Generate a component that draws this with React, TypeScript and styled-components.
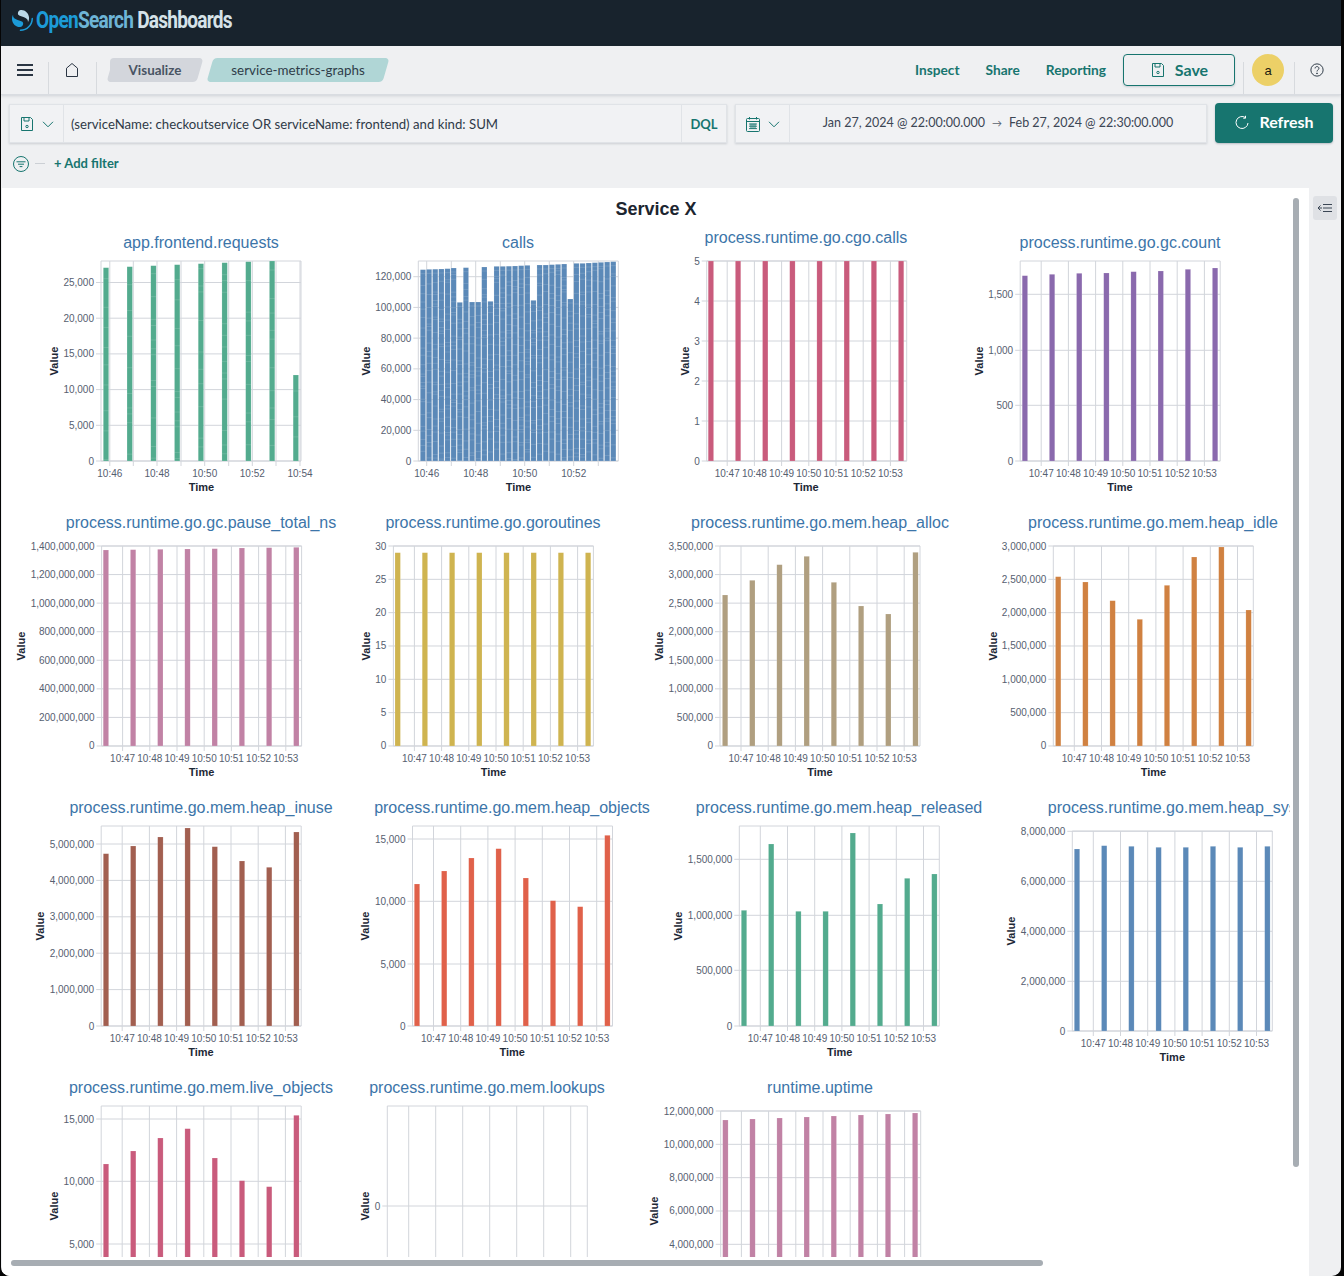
import React from 'react';
import styled, { createGlobalStyle } from 'styled-components';

const GlobalStyle = createGlobalStyle`
  html, body {
    margin: 0;
    padding: 0;
    background: #050505;
  }
  * {
    box-sizing: border-box;
  }
`;

const UI_FONT = `"Lato", "Open Sans", sans-serif`;
const CHART_FONT = `"Liberation Sans", Arial, sans-serif`;
const TEAL = '#17756f';

const Frame = styled.div`
  width: 1340px;
  height: 1276px;
  margin-left: 1px;
  overflow: hidden;
  display: flex;
  flex-direction: column;
  background: #eff0f2;
  border-radius: 0 0 9px 9px;
  font-family: ${UI_FONT};
`;

const TopBar = styled.div`
  height: 46px;
  flex: none;
  display: flex;
  align-items: center;
  gap: 3px;
  padding: 0 0 6px 11px;
  background: #18232d;
`;

const Brand = styled.div`
  font-family: "Roboto", sans-serif;
  font-size: 23px;
  font-weight: 700;
  letter-spacing: -0.9px;
  white-space: nowrap;
  color: #d5e2e8;
  transform: scaleX(0.83);
  transform-origin: left center;
`;

const BrandPart = styled.span<{ $color: string }>`
  color: ${p => p.$color};
`;

const AppBar = styled.div`
  height: 49px;
  flex: none;
  display: flex;
  align-items: stretch;
  padding-left: 0;
  border-bottom: 1px solid #d9dce1;
  box-shadow: 0 1px 3px rgba(60, 70, 90, 0.18);
  background: #eff0f2;
`;

const IconSlot = styled.div<{ $width: number; $shift?: number }>`
  width: ${p => p.$width}px;
  flex: none;
  display: flex;
  align-items: center;
  justify-content: center;
  padding-bottom: 1px;
  padding-right: ${p => p.$shift ?? 0}px;
  color: #2b3644;
`;

const BarDivider = styled.div`
  width: 1px;
  flex: none;
  margin-top: 16px;
  background: #d7dade;
`;

const Crumbs = styled.div`
  display: flex;
  align-items: center;
  gap: 10px;
  margin-left: 13px;
  height: 48px;
`;

const Crumb = styled.div<{ $bg: string; $color: string; $weight: number; $width: number; $first?: boolean }>`
  position: relative;
  width: ${p => p.$width}px;
  height: 24px;
  display: flex;
  align-items: center;
  justify-content: center;
  padding-bottom: 1px;
  font-size: 13.4px;
  font-weight: ${p => p.$weight};
  color: ${p => p.$color};
  z-index: 0;

  &::before {
    content: '';
    position: absolute;
    inset: 0;
    z-index: -1;
    border-radius: 4px;
    background: ${p => p.$bg};
    transform: skewX(-16deg);
  }

  &::after {
    content: '';
    display: ${p => (p.$first ? 'block' : 'none')};
    position: absolute;
    top: 0;
    bottom: 0;
    left: 0;
    width: 16px;
    z-index: -1;
    border-radius: 4px 0 0 4px;
    background: ${p => p.$bg};
  }
`;

const BarSpacer = styled.div`
  flex: 1;
`;

const NavLinks = styled.div`
  display: flex;
  align-items: center;
  gap: 26px;
  margin-right: 17px;
  padding-bottom: 2px;
`;

const NavLink = styled.span`
  font-size: 13.7px;
  font-weight: 700;
  color: ${TEAL};
`;

const SaveButton = styled.div`
  width: 112px;
  height: 32px;
  align-self: center;
  display: flex;
  align-items: center;
  justify-content: center;
  gap: 9px;
  margin-right: 8px;
  border: 1px solid ${TEAL};
  border-radius: 4px;
  font-size: 16px;
  font-weight: 700;
  color: ${TEAL};
  box-shadow: 0 1px 2px rgba(60, 70, 90, 0.2);
`;

const ButtonLabel = styled.span<{ $lift: number }>`
  margin-bottom: ${p => p.$lift}px;
`;

const AvatarSlot = styled.div`
  width: 50px;
  flex: none;
  display: flex;
  align-items: center;
  justify-content: center;
  padding-right: 2px;
`;

const Avatar = styled.div`
  width: 32px;
  height: 32px;
  border-radius: 50%;
  display: flex;
  align-items: center;
  justify-content: center;
  background: #ecd067;
  font-family: ${CHART_FONT};
  font-size: 13px;
  color: #1b1b10;
`;

const QueryRow = styled.div`
  height: 58px;
  flex: none;
  display: flex;
  align-items: flex-start;
  gap: 8px;
  padding: 9px 7px 0 8px;
`;

const FieldGroup = styled.div<{ $width: number }>`
  width: ${p => p.$width}px;
  height: 39px;
  flex: none;
  display: flex;
  align-items: stretch;
  background: #f1f2f4;
  border: 1px solid #e0e3e7;
  box-shadow: 0 1px 2px rgba(60, 70, 90, 0.2);
`;

const FieldPrepend = styled.div<{ $width: number }>`
  width: ${p => p.$width}px;
  flex: none;
  display: flex;
  align-items: center;
  justify-content: center;
  gap: 7px;
  border-right: 1px solid #e0e3e7;
  color: ${TEAL};
`;

const QueryText = styled.div`
  flex: 1;
  display: flex;
  align-items: center;
  padding-left: 7px;
  font-size: 13.2px;
  color: #2f3a48;
  white-space: nowrap;
`;

const LanguageToggle = styled.div`
  width: 45px;
  flex: none;
  display: flex;
  align-items: center;
  justify-content: center;
  border-left: 1px solid #e0e3e7;
  font-size: 13px;
  font-weight: 700;
  color: ${TEAL};
`;

const DateRange = styled.div`
  flex: 1;
  display: flex;
  align-items: center;
  justify-content: center;
  gap: 7px;
  padding-bottom: 2px;
  font-size: 12.5px;
  color: #3c4654;
  white-space: nowrap;
`;

const RangeArrow = styled.span`
  font-size: 10px;
  color: #59636f;
`;

const RefreshButton = styled.div`
  width: 118px;
  height: 40px;
  flex: none;
  margin-top: -1px;
  display: flex;
  align-items: center;
  justify-content: center;
  gap: 9px;
  border-radius: 4px;
  background: ${TEAL};
  font-size: 16px;
  font-weight: 700;
  color: #ffffff;
  box-shadow: 0 1px 2px rgba(60, 70, 90, 0.3);
`;

const FilterRow = styled.div`
  height: 35px;
  flex: none;
  display: flex;
  align-items: center;
  padding: 0 0 14px 12px;
`;

const FilterDash = styled.div`
  width: 10px;
  height: 1px;
  margin: 0 9px 0 6px;
  background: #ccd0d5;
`;

const AddFilter = styled.span`
  margin-top: -2px;
  font-size: 13px;
  font-weight: 700;
  color: ${TEAL};
`;

const Workspace = styled.div`
  flex: 1;
  min-height: 0;
  display: flex;
  padding-left: 1px;
`;

const Panel = styled.div`
  position: relative;
  width: 1307px;
  flex: none;
  display: flex;
  flex-direction: column;
  background: #ffffff;
`;

const PanelTitle = styled.div`
  height: 37px;
  flex: none;
  padding: 10px 0 0 1px;
  text-align: center;
  font-family: ${CHART_FONT};
  font-size: 18px;
  line-height: 22px;
  font-weight: 700;
  color: #1c2530;
`;

const ChartGrid = styled.div`
  width: 1288px;
  height: 1032px;
  display: grid;
  grid-template-columns: 318px 320px 320px 330px;
  grid-template-rows: 285px 285px 280px 182px;
  overflow: hidden;
`;

const ChartSvg = styled.svg`
  display: block;
  overflow: visible;
  font-family: ${CHART_FONT};
`;

const ChartTitle = styled.text`
  font-size: 16px;
  fill: #3c75a9;
  text-anchor: middle;
`;

const TickLabel = styled.text<{ $anchor: string }>`
  font-size: 10px;
  fill: #566070;
  text-anchor: ${p => p.$anchor};
`;

const AxisTitle = styled.text`
  font-size: 11px;
  font-weight: 700;
  fill: #1d2836;
  text-anchor: middle;
`;

const GridLine = styled.line`
  stroke: #d2d5db;
  stroke-width: 1;
`;

const ScrollThumbY = styled.div`
  position: absolute;
  left: 1291px;
  top: 10px;
  width: 6px;
  height: 969px;
  border-radius: 3px;
  background: #a7adb3;
`;

const ScrollThumbX = styled.div`
  position: absolute;
  left: 9px;
  bottom: 10px;
  width: 1032px;
  height: 6px;
  border-radius: 3px;
  background: #a7adb3;
`;

const Gutter = styled.div`
  flex: 1;
  padding: 8px 0 0 4px;
`;

const CollapseButton = styled.div`
  width: 24px;
  height: 24px;
  display: flex;
  align-items: center;
  justify-content: center;
  border-radius: 3px;
  background: #dfe1e5;
  color: #3a4654;
`;

const COLORS = {
  green: '#53ab8e',
  blue: '#5b89b8',
  pink: '#c95b7c',
  purple: '#8a69ad',
  mauve: '#c182a5',
  yellow: '#cfb450',
  tan: '#b09f80',
  orange: '#d08141',
  brown: '#a25f50',
  red: '#e0614a'
};

interface ChartSpec {
  title: string;
  titleX: number;
  titleY: number;
  left: number;
  top: number;
  valueX: number;
  timeX: number;
  yTicks: [string, number][];
  xTicks: [string, number][];
  barStart: number;
  barStep: number;
  barWidth: number;
  tops: number[];
  color: string;
  stripes?: number;
}

// the eight one minute buckets most panels share
const minuteTicks = (left: number, offset = 21, step = 27.2): [string, number][] =>
  ['10:47', '10:48', '10:49', '10:50', '10:51', '10:52', '10:53'].map((label, i) => [
    label,
    left + offset + i * step
  ]);

const evenTicks = (labels: string[], start: number, step: number): [string, number][] =>
  labels.map((label, i) => [label, start + i * step]);

const CHARTS: ChartSpec[] = [
  {
    title: 'app.frontend.requests', titleX: 201, titleY: 243, left: 101, top: 261, valueX: 54, timeX: 201.5,
    yTicks: evenTicks(['25,000', '20,000', '15,000', '10,000', '5,000', '0'], 282.5, 35.7),
    xTicks: [['10:46', 109.8], ['', 133.3], ['10:48', 157], ['', 181], ['10:50', 204.7], ['', 228.7], ['10:52', 252.3], ['', 276], ['10:54', 300]],
    barStart: 103.3, barStep: 23.73, barWidth: 5.4,
    tops: [267.7, 266.7, 265.7, 264.7, 263.7, 262.7, 261.7, 261, 375],
    color: COLORS.green, stripes: 17
  },
  {
    title: 'calls', titleX: 518, titleY: 243, left: 418.3, top: 261, valueX: 366, timeX: 518.5,
    yTicks: evenTicks(['120,000', '100,000', '80,000', '60,000', '40,000', '20,000', '0'], 276.7, 30.72),
    xTicks: [['10:46', 426.7], ['', 451.3], ['10:48', 475.7], ['', 500.3], ['10:50', 524.7], ['', 549.3], ['10:52', 573.7], ['', 598.3]],
    barStart: 420.3, barStep: 6.14, barWidth: 5.3,
    tops: [134, 133, 132.5, 132, 131, 129, 232, 128, 231, 231, 126, 229, 124, 124, 123.5, 123, 122, 121, 226, 120, 120, 119, 118, 117, 222, 115, 115, 114, 113, 112, 111, 110].map(v => 225 + v / 3),
    color: COLORS.blue, stripes: 7
  },
  {
    title: 'process.runtime.go.cgo.calls', titleX: 806, titleY: 238, left: 706.7, top: 261, valueX: 684.5, timeX: 806,
    yTicks: evenTicks(['5', '4', '3', '2', '1', '0'], 261, 40),
    xTicks: minuteTicks(706.7, 20.5),
    barStart: 708.2, barStep: 27.17, barWidth: 5.4,
    tops: [261, 261, 261, 261, 261, 261, 261, 261],
    color: COLORS.pink
  },
  {
    title: 'process.runtime.go.gc.count', titleX: 1120, titleY: 243, left: 1020.2, top: 261, valueX: 978.7, timeX: 1120,
    yTicks: [['1,500', 294.3], ['1,000', 350.3], ['500', 405.3], ['0', 461]],
    xTicks: minuteTicks(1020.2),
    barStart: 1022.2, barStep: 27.17, barWidth: 5.4,
    tops: [275.7, 274.3, 273.3, 273, 271.7, 271, 269.3, 268],
    color: COLORS.purple
  },
  {
    title: 'process.runtime.go.gc.pause_total_ns', titleX: 201, titleY: 523, left: 101.6, top: 546, valueX: 20.6, timeX: 201.6,
    yTicks: evenTicks(['1,400,000,000', '1,200,000,000', '1,000,000,000', '800,000,000', '600,000,000', '400,000,000', '200,000,000', '0'], 546, 28.57),
    xTicks: minuteTicks(101.6),
    barStart: 103.2, barStep: 27.2, barWidth: 5.4,
    tops: [550, 549.7, 549.3, 549, 548.7, 548, 547.7, 547.3],
    color: COLORS.mauve
  },
  {
    title: 'process.runtime.go.goroutines', titleX: 493, titleY: 523, left: 393.4, top: 546, valueX: 366, timeX: 493.5,
    yTicks: evenTicks(['30', '25', '20', '15', '10', '5', '0'], 546, 33.33),
    xTicks: minuteTicks(393.4),
    barStart: 395, barStep: 27.2, barWidth: 5.4,
    tops: [552.7, 552.7, 552.7, 552.7, 552.7, 552.7, 552.7, 552.7],
    color: COLORS.yellow
  },
  {
    title: 'process.runtime.go.mem.heap_alloc', titleX: 820, titleY: 523, left: 720, top: 546, valueX: 659.2, timeX: 820,
    yTicks: evenTicks(['3,500,000', '3,000,000', '2,500,000', '2,000,000', '1,500,000', '1,000,000', '500,000', '0'], 546, 28.57),
    xTicks: minuteTicks(720),
    barStart: 722.4, barStep: 27.2, barWidth: 5.4,
    tops: [595, 580.3, 564.7, 556.3, 582.3, 606, 614, 552.3],
    color: COLORS.tan
  },
  {
    title: 'process.runtime.go.mem.heap_idle', titleX: 1153, titleY: 523, left: 1053.3, top: 546, valueX: 992.6, timeX: 1153.5,
    yTicks: evenTicks(['3,000,000', '2,500,000', '2,000,000', '1,500,000', '1,000,000', '500,000', '0'], 546, 33.33),
    xTicks: minuteTicks(1053.3),
    barStart: 1055.5, barStep: 27.2, barWidth: 5.4,
    tops: [576.7, 582, 600.7, 619.3, 585.3, 557, 547, 610],
    color: COLORS.orange
  },
  {
    title: 'process.runtime.go.mem.heap_inuse', titleX: 201, titleY: 808, left: 101.2, top: 826, valueX: 40, timeX: 201,
    yTicks: evenTicks(['5,000,000', '4,000,000', '3,000,000', '2,000,000', '1,000,000', '0'], 844, 36.4),
    xTicks: minuteTicks(101.2),
    barStart: 103.3, barStep: 27.2, barWidth: 5.4,
    tops: [853.7, 846, 837, 828, 846.7, 861, 867.3, 832],
    color: COLORS.brown
  },
  {
    title: 'process.runtime.go.mem.heap_objects', titleX: 512, titleY: 808, left: 412.5, top: 826, valueX: 365.3, timeX: 512.2,
    yTicks: [['15,000', 839], ['10,000', 901.3], ['5,000', 964], ['0', 1026]],
    xTicks: minuteTicks(412.5),
    barStart: 414.3, barStep: 27.2, barWidth: 5.4,
    tops: [884, 871, 858, 848.7, 878, 900.7, 906.7, 835.3],
    color: COLORS.red
  },
  {
    title: 'process.runtime.go.mem.heap_released', titleX: 839, titleY: 808, left: 739.3, top: 826, valueX: 678.3, timeX: 839.7,
    yTicks: [['1,500,000', 859.3], ['1,000,000', 915.3], ['500,000', 970.3], ['0', 1026]],
    xTicks: minuteTicks(739.3),
    barStart: 741.3, barStep: 27.2, barWidth: 5.4,
    tops: [910.3, 844, 911.3, 911.3, 833, 904, 878.3, 874],
    color: COLORS.green
  },
  {
    title: 'process.runtime.go.mem.heap_sys', titleX: 1172.3, titleY: 808, left: 1072.3, top: 831, valueX: 1011.3, timeX: 1172.3,
    yTicks: [['8,000,000', 831.3], ['6,000,000', 881.3], ['4,000,000', 931.3], ['2,000,000', 981.3], ['0', 1031]],
    xTicks: minuteTicks(1072.3),
    barStart: 1074.3, barStep: 27.2, barWidth: 5.4,
    tops: [849, 845.7, 846.3, 847.3, 847.3, 846.3, 847.3, 846.3],
    color: COLORS.blue
  },
  {
    title: 'process.runtime.go.mem.live_objects', titleX: 201, titleY: 1088, left: 101.2, top: 1106, valueX: 53.9, timeX: 201,
    yTicks: [['15,000', 1119], ['10,000', 1181.3], ['5,000', 1244], ['0', 1306]],
    xTicks: minuteTicks(101.2),
    barStart: 103.3, barStep: 27.2, barWidth: 5.4,
    tops: [1164, 1151, 1138, 1128.7, 1158, 1180.7, 1186.7, 1115.3],
    color: COLORS.pink
  },
  {
    title: 'process.runtime.go.mem.lookups', titleX: 487, titleY: 1088, left: 387.3, top: 1106, valueX: 365.3, timeX: 487,
    yTicks: [['0', 1206]],
    xTicks: minuteTicks(387.3, 21.4, 27),
    barStart: 0, barStep: 0, barWidth: 0,
    tops: [],
    color: COLORS.blue
  },
  {
    title: 'runtime.uptime', titleX: 820, titleY: 1088, left: 720.7, top: 1111, valueX: 654, timeX: 820,
    yTicks: evenTicks(['12,000,000', '10,000,000', '8,000,000', '6,000,000', '4,000,000', '2,000,000', '0'], 1111, 33.33),
    xTicks: minuteTicks(720.7, 20.7),
    barStart: 722.7, barStep: 27.1, barWidth: 5.4,
    tops: [1120, 1119, 1118, 1117, 1116, 1115, 1114, 1113],
    color: COLORS.mauve
  }
];

const COLUMN_X = [2, 320, 640, 960];
const COLUMN_W = [318, 320, 320, 330];
const ROW_Y = [225, 510, 795, 1075];
const ROW_H = [285, 285, 280, 182];

// stacked segments show as faint light bands in the busier bars
const stripeOffsets = (seed: number, height: number, spacing: number) => {
  const out: number[] = [];
  let y = 4 + (seed * 7) % spacing;
  let n = seed * 13 + 5;
  while (y < height) {
    out.push(y);
    n = (n * 29 + 11) % 97;
    y += spacing * (0.35 + (n % 10) / 6);
  }
  return out;
};

const Chart: React.FC<{ spec: ChartSpec; index: number }> = ({ spec, index }) => {
  const col = index % 4;
  const row = Math.floor(index / 4);
  const x = COLUMN_X[col];
  const y = ROW_Y[row];
  const w = COLUMN_W[col];
  const h = ROW_H[row];
  const right = spec.left + 200;
  const bottom = spec.top + 200;

  return (
    <ChartSvg width={w} height={h} viewBox={`${x} ${y} ${w} ${h}`}>
      <ChartTitle x={spec.titleX} y={spec.titleY + 4.5}>{spec.title}</ChartTitle>
      {spec.yTicks.map(([label, ty]) => (
        <g key={label}>
          <GridLine x1={spec.left - 5} x2={right} y1={ty} y2={ty} />
          <TickLabel $anchor="end" x={spec.left - 7} y={ty + 3.5}>{label}</TickLabel>
        </g>
      ))}
      {spec.xTicks.map(([label, tx]) => (
        <g key={tx}>
          <GridLine x1={tx} x2={tx} y1={spec.top} y2={bottom + 5} />
          {label && <TickLabel $anchor="middle" x={tx} y={bottom + 15.5}>{label}</TickLabel>}
        </g>
      ))}
      <GridLine x1={spec.left} x2={spec.left} y1={spec.top} y2={bottom} />
      <GridLine x1={right} x2={right} y1={spec.top} y2={bottom} />
      <GridLine x1={spec.left} x2={right} y1={spec.top} y2={spec.top} />
      <GridLine x1={spec.left} x2={right} y1={bottom} y2={bottom} />
      {spec.tops.map((top, i) => {
        const bx = spec.barStart + i * spec.barStep;
        return (
          <g key={i}>
            <rect x={bx} y={top} width={spec.barWidth} height={bottom - top} fill={spec.color} stroke="#ffffff" strokeOpacity={0.3} strokeWidth={0.5} />
            {spec.stripes &&
              stripeOffsets(i + 1, bottom - top, spec.stripes).map(o => (
                <line key={o} x1={bx} x2={bx + spec.barWidth} y1={top + o} y2={top + o} stroke="#ffffff" strokeOpacity={0.2} strokeWidth={0.7} />
              ))}
          </g>
        );
      })}
      <AxisTitle transform={`translate(${spec.valueX} ${spec.top + 100}) rotate(-90)`} y={4}>Value</AxisTitle>
      <AxisTitle x={spec.timeX} y={bottom + 30}>Time</AxisTitle>
    </ChartSvg>
  );
};

const OpenSearchMark = () => (
  <svg width="21" height="21" viewBox="0 0 64 64" fill="none">
    <path d="M61.74 23.5C60.49 23.5 59.47 24.51 59.47 25.76C59.47 44.38 44.38 59.47 25.76 59.47C24.51 59.47 23.5 60.49 23.5 61.74C23.5 62.99 24.51 64 25.76 64C46.88 64 64 46.88 64 25.76C64 24.51 62.99 23.5 61.74 23.5Z" fill="#1c9bd8" />
    <path d="M48.08 38C50.26 34.45 52.36 29.72 51.95 23.09C51.09 9.37 38.66 -1.04 26.92 0.08C22.33 0.53 17.61 4.27 18.03 10.98C18.21 13.9 19.64 15.62 21.95 16.94C24.16 18.2 27.1 19 30.43 19.93C34.45 21.06 39.11 22.35 42.7 24.99C46.99 28.15 49.93 31.82 48.08 38Z" fill="#bcd9e8" />
    <path d="M3.92 14C1.74 17.55 -0.36 22.28 0.05 28.91C0.91 42.63 13.34 53.04 25.08 51.92C29.67 51.47 34.39 47.73 33.97 41.02C33.79 38.1 32.36 36.38 30.05 35.06C27.84 33.8 24.9 33 21.57 32.07C17.55 30.94 12.89 29.65 9.3 27.01C5.01 23.85 2.07 20.18 3.92 14Z" fill="#1c9bd8" />
  </svg>
);

const MenuIcon = () => (
  <svg width="16" height="12" viewBox="0 0 16 12" fill="currentColor">
    <rect width="16" height="2" />
    <rect y="5" width="16" height="2" />
    <rect y="10" width="16" height="2" />
  </svg>
);

const HomeIcon = () => (
  <svg width="16" height="16" viewBox="0 0 16 16" fill="none" stroke="currentColor" strokeWidth="1">
    <path d="M2.5 14.5V6.2L8 1.5l5.5 4.7v8.3z" strokeLinejoin="round" />
  </svg>
);

const SaveIcon = ({ size = 16 }: { size?: number }) => (
  <svg width={size} height={size} viewBox="0 0 16 16" fill="none" stroke="currentColor" strokeWidth="1">
    <path d="M2.5 1.5h9l2 2v11h-11z" strokeLinejoin="round" />
    <path d="M5 1.5v3.5h5V1.5" />
    <circle cx="8" cy="10.5" r="1.2" />
  </svg>
);

const ChevronIcon = () => (
  <svg width="12" height="12" viewBox="0 0 12 12" fill="none" stroke="currentColor" strokeWidth="1">
    <path d="M1 3.8l5 5 5-5" />
  </svg>
);

const CalendarIcon = () => (
  <svg width="16" height="16" viewBox="0 0 16 16" fill="none" stroke="currentColor" strokeWidth="1">
    <rect x="1.5" y="2.5" width="13" height="13" rx="1" />
    <path d="M1.5 5.5h13M4.5 1v2.5M11.5 1v2.5" />
    <path d="M4 8h8M4 10.2h8M4 12.6h8M6 7.5v5.5M8 7.5v5.5M10 7.5v5.5" strokeWidth="0.9" />
  </svg>
);

const RefreshIcon = () => (
  <svg width="16" height="16" viewBox="0 0 16 16" fill="none" stroke="currentColor" strokeWidth="1">
    <path d="M11.5 2.6A6 6 0 1 0 14 8" />
    <path d="M11.5 0.8v2.4H9.2" />
  </svg>
);

const HelpIcon = () => (
  <svg width="14" height="14" viewBox="0 0 16 16" fill="none" stroke="currentColor" strokeWidth="1.1">
    <circle cx="8" cy="8" r="7" />
    <path d="M5.8 6.2c0-1.3 1-2.1 2.2-2.1s2.2.8 2.2 2c0 1.8-2.2 1.7-2.2 3.6" />
    <circle cx="8" cy="11.8" r="0.5" fill="currentColor" />
  </svg>
);

const FilterIcon = () => (
  <svg width="16" height="16" viewBox="0 0 16 16" fill="none" stroke={TEAL} strokeWidth="1">
    <circle cx="8" cy="8" r="7.5" />
    <path d="M3.5 5.8h9M5 8.2h6M6.6 10.6h2.8" />
  </svg>
);

const CollapseIcon = () => (
  <svg width="16" height="16" viewBox="0 0 16 16" fill="none" stroke="currentColor" strokeWidth="1">
    <path d="M6 4.5h9M6 8h9M6 11.5h9M1 8h4M3.5 5.5L1 8l2.5 2.5" />
  </svg>
);

export default function App() {
  return (
    <>
      <GlobalStyle />
      <Frame>
        <TopBar>
          <OpenSearchMark />
          <Brand>
            <BrandPart $color="#1c9bd8">Open</BrandPart>
            <BrandPart $color="#6db4d6">Search</BrandPart> Dashboards
          </Brand>
        </TopBar>

        <AppBar>
          <IconSlot $width={47}><MenuIcon /></IconSlot>
          <BarDivider />
          <IconSlot $width={47} $shift={1}><HomeIcon /></IconSlot>
          <BarDivider />
          <Crumbs>
            <Crumb $first $bg="#d3d6dc" $color="#495463" $weight={700} $width={90}>Visualize</Crumb>
            <Crumb $bg="#b0d6d6" $color="#2f3d49" $weight={400} $width={176}>service-metrics-graphs</Crumb>
          </Crumbs>
          <BarSpacer />
          <NavLinks>
            <NavLink>Inspect</NavLink>
            <NavLink>Share</NavLink>
            <NavLink>Reporting</NavLink>
          </NavLinks>
          <SaveButton><SaveIcon /><ButtonLabel $lift={2}>Save</ButtonLabel></SaveButton>
          <BarDivider />
          <AvatarSlot><Avatar>a</Avatar></AvatarSlot>
          <BarDivider />
          <IconSlot $width={46} $shift={2}><HelpIcon /></IconSlot>
        </AppBar>

        <QueryRow>
          <FieldGroup $width={718}>
            <FieldPrepend $width={54}><SaveIcon /><ChevronIcon /></FieldPrepend>
            <QueryText>(serviceName: checkoutservice OR serviceName: frontend) and kind: SUM</QueryText>
            <LanguageToggle>DQL</LanguageToggle>
          </FieldGroup>
          <FieldGroup $width={472}>
            <FieldPrepend $width={54}><CalendarIcon /><ChevronIcon /></FieldPrepend>
            <DateRange>
              Jan 27, 2024 @ 22:00:00.000
              <RangeArrow>→</RangeArrow>
              Feb 27, 2024 @ 22:30:00.000
            </DateRange>
          </FieldGroup>
          <RefreshButton><RefreshIcon /><ButtonLabel $lift={4}>Refresh</ButtonLabel></RefreshButton>
        </QueryRow>

        <FilterRow>
          <FilterIcon />
          <FilterDash />
          <AddFilter>+ Add filter</AddFilter>
        </FilterRow>

        <Workspace>
          <Panel>
            <PanelTitle>Service X</PanelTitle>
            <ChartGrid>
              {CHARTS.map((spec, i) => (
                <Chart key={spec.title} spec={spec} index={i} />
              ))}
            </ChartGrid>
            <ScrollThumbY />
            <ScrollThumbX />
          </Panel>
          <Gutter>
            <CollapseButton><CollapseIcon /></CollapseButton>
          </Gutter>
        </Workspace>
      </Frame>
    </>
  );
}
